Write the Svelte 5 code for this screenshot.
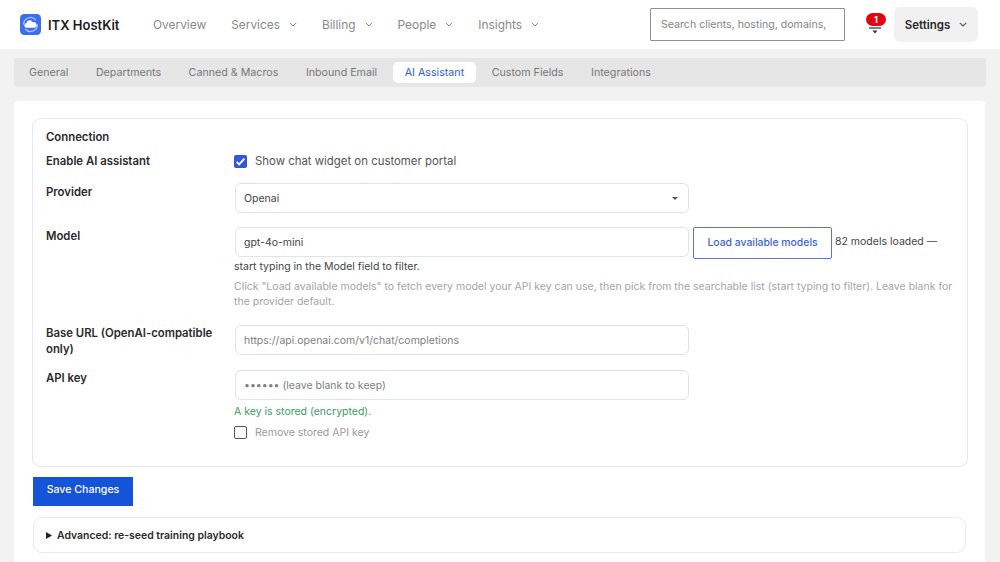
<script lang="ts">
  type Tab = { label: string; active?: boolean };

  const navItems = [
    { label: 'Overview', caret: false },
    { label: 'Services', caret: true },
    { label: 'Billing', caret: true },
    { label: 'People', caret: true },
    { label: 'Insights', caret: true }
  ];

  const tabs: Tab[] = [
    { label: 'General' },
    { label: 'Departments' },
    { label: 'Canned & Macros' },
    { label: 'Inbound Email' },
    { label: 'AI Assistant', active: true },
    { label: 'Custom Fields' },
    { label: 'Integrations' }
  ];
</script>

<header class="topbar">
  <div class="brand">
    <svg class="logo" width="21" height="21" viewBox="0 0 20 20">
      <rect width="20" height="20" rx="4" fill="#3b6ff0" />
      <path d="M3.4 10a6.6 6.6 0 0 1 11.6-4.3M16.6 10A6.6 6.6 0 0 1 5 14.3" fill="none" stroke="#fff" stroke-opacity="0.6" stroke-width="1.2" />
      <path d="M6.4 13a2.2 2.2 0 0 1-.2-4.4 3.1 3.1 0 0 1 5.9-.8 2.7 2.7 0 0 1 1.9 5.2z" fill="#fff" />
    </svg>
    <span class="brand-name">ITX HostKit</span>
  </div>
  <nav class="nav">
    {#each navItems as item}
      <span class="nav-item">
        {item.label}
        {#if item.caret}
          <svg width="8" height="5" viewBox="0 0 8 5"><path d="M.8.8 4 4 7.2.8" fill="none" stroke="#8a8a8a" stroke-width="1" /></svg>
        {/if}
      </span>
    {/each}
  </nav>
  <div class="search">Search clients, hosting, domains,</div>
  <div class="bell">
    <svg width="14" height="7" viewBox="0 0 14 7"><path d="M1 1h12" stroke="#333" stroke-width="1.2" fill="none" /><path d="M4.5 3.5h5L7 6.5z" fill="#333" /></svg>
    <span class="badge">1</span>
  </div>
  <div class="settings">
    Settings
    <svg width="8" height="5" viewBox="0 0 8 5"><path d="M.8.8 4 4 7.2.8" fill="none" stroke="#555" stroke-width="1.1" /></svg>
  </div>
</header>

<main class="page">
  <div class="tabs">
    {#each tabs as tab}
      <span class="tab" class:active={tab.active}>{tab.label}</span>
    {/each}
  </div>

  <section class="panel">
    <div class="group">
      <div class="group-title">Connection</div>

      <div class="row row-check">
        <div class="label">Enable AI assistant</div>
        <div class="check-line">
          <span class="box checked">
            <svg width="13" height="13" viewBox="0 0 13 13"><path d="M2.6 6.8 5.2 9.4 10.4 3.6" fill="none" stroke="#fff" stroke-width="1.8" /></svg>
          </span>
          <span class="check-text">Show chat widget on customer portal</span>
        </div>
      </div>

      <div class="row row-provider">
        <div class="label">Provider</div>
        <div class="field select">
          Openai
          <svg width="6" height="3" viewBox="0 0 6 3"><path d="M0 0h6L3 3z" fill="#555" /></svg>
        </div>
      </div>

      <div class="row row-model">
        <div class="label">Model</div>
        <div class="control">
          <div class="model-line">
            <div class="field">gpt-4o-mini</div>
            <div class="load-btn">Load available models</div>
            <span class="loaded">82 models loaded —</span>
          </div>
          <div class="filter-note">start typing in the Model field to filter.</div>
          <div class="hint">Click "Load available models" to fetch every model your API key can use, then pick from the searchable list (start typing to filter). Leave blank for the provider default.</div>
        </div>
      </div>

      <div class="row row-base">
        <div class="label">Base URL (OpenAI-compatible only)</div>
        <div class="field muted">https://api.openai.com/v1/chat/completions</div>
      </div>

      <div class="row row-key">
        <div class="label">API key</div>
        <div class="control">
          <div class="field muted">•••••• (leave blank to keep)</div>
          <div class="stored">A key is stored (encrypted).</div>
          <div class="check-line remove">
            <span class="box"></span>
            <span class="check-text faded">Remove stored API key</span>
          </div>
        </div>
      </div>
    </div>

    <button class="save" type="button">Save Changes</button>

    <div class="advanced">
      <svg width="6" height="7" viewBox="0 0 6 7"><path d="M0 0 6 3.5 0 7z" fill="#222" /></svg>
      Advanced: re-seed training playbook
    </div>
  </section>
</main>

<style>
  :global(body) {
    margin: 0;
    background: #f2f2f2;
    font-family: Inter, "Liberation Sans", sans-serif;
    overflow: hidden;
  }

  .topbar {
    height: 49px;
    box-sizing: border-box;
    background: #fff;
    display: flex;
    align-items: center;
    padding: 0 22px 0 20px;
  }

  .brand {
    display: flex;
    align-items: center;
    gap: 7px;
    width: 133px;
  }

  .brand-name {
    font-size: 13px;
    font-weight: 600;
    color: #1c1c1c;
    white-space: nowrap;
  }

  .nav {
    display: flex;
    gap: 25px;
    flex: 1;
    font-size: 11.9px;
    color: #8a8a8a;
  }

  .nav-item {
    display: flex;
    align-items: center;
    gap: 9px;
    white-space: nowrap;
  }

  .search {
    width: 195px;
    height: 33px;
    box-sizing: border-box;
    border: 1px solid #8f8f8f;
    border-radius: 1px;
    font-size: 10.6px;
    color: #858585;
    padding: 0 10px;
    display: flex;
    align-items: center;
    white-space: nowrap;
    overflow: hidden;
  }

  .bell {
    position: relative;
    width: 49px;
    height: 33px;
    display: flex;
    justify-content: center;
    align-items: flex-end;
    padding: 0 0 7px 11px;
    box-sizing: border-box;
  }

  .badge {
    position: absolute;
    left: 21px;
    top: 5px;
    width: 20px;
    height: 13px;
    border-radius: 7px;
    background: #e1060f;
    color: #fff;
    font-size: 9px;
    font-weight: 700;
    text-align: center;
    line-height: 13px;
  }

  .settings {
    width: 84px;
    height: 35px;
    box-sizing: border-box;
    background: #f1f1f1;
    border-radius: 6px;
    font-size: 11.5px;
    font-weight: 600;
    color: #2a2a2a;
    display: flex;
    align-items: center;
    justify-content: center;
    gap: 9px;
  }

  .page {
    padding: 9px 14px 0;
  }

  .tabs {
    height: 29px;
    box-sizing: border-box;
    background: #e6e6e6;
    border-radius: 4px;
    display: flex;
    align-items: center;
    gap: 3.5px;
    padding: 0 3px;
    font-size: 10.7px;
    color: #777;
    margin-bottom: 14px;
  }

  .tab {
    padding: 0 12px;
    height: 21px;
    line-height: 21px;
    border-radius: 5px;
    white-space: nowrap;
  }

  .tab.active {
    background: #fff;
    color: #2f5fe0;
  }

  .panel {
    background: #fff;
    padding: 17px 17px 0 18px;
    margin-right: 1px;
    border-radius: 4px 4px 0 0;
    height: 470px;
    box-sizing: border-box;
  }

  .group {
    border: 1px solid #e6e8ec;
    border-radius: 9px;
    padding: 11px 10px 26px 13px;
    box-sizing: border-box;
    margin-bottom: 10px;
  }

  .group-title,
  .label {
    font-size: 11.35px;
    font-weight: 600;
    color: #2a2a2a;
    line-height: 14px;
  }

  .label {
    line-height: 16px;
    padding-right: 14px;
  }

  .row {
    display: grid;
    grid-template-columns: 188px 1fr;
    align-items: start;
  }

  .row-check .label,
  .row-provider .label,
  .row-model .label {
    padding-top: 1px;
  }

  .row-check {
    margin-top: 8px;
  }

  .row-check .check-line {
    margin-top: 1px;
  }

  .check-line {
    display: flex;
    align-items: center;
    gap: 8px;
    height: 16px;
  }

  .box {
    width: 13px;
    height: 13px;
    border-radius: 2px;
    box-sizing: border-box;
    border: 1.5px solid #555;
    display: block;
    flex: none;
  }

  .box.checked {
    background: #3355e0;
    border: 0;
  }

  .box svg {
    display: block;
  }

  .check-text {
    font-size: 11.4px;
    color: #555;
    white-space: nowrap;
  }

  .check-text.faded {
    font-size: 10.5px;
    color: #9a9a9a;
  }

  .field {
    width: 454px;
    height: 30px;
    box-sizing: border-box;
    border: 1px solid #dfe3ea;
    border-radius: 6px;
    font-size: 10.5px;
    color: #444;
    padding: 0 8px;
    margin-left: 1px;
    display: flex;
    align-items: center;
    white-space: nowrap;
    flex: none;
  }

  .field.muted {
    color: #808080;
  }

  .select {
    justify-content: space-between;
    padding-right: 10px;
  }

  .row-provider {
    margin-top: 14px;
  }

  .row-model {
    margin-top: 14px;
  }

  .row-base {
    margin-top: 16px;
  }

  .row-key {
    margin-top: 13px;
  }

  .model-line {
    display: flex;
    align-items: flex-start;
    gap: 4px;
    white-space: nowrap;
  }

  .load-btn {
    width: 139px;
    height: 32px;
    box-sizing: border-box;
    border: 1.5px solid #5673e8;
    border-radius: 2px;
    color: #3e5fdc;
    font-size: 10.4px;
    font-weight: 500;
    padding-bottom: 1px;
    display: flex;
    align-items: center;
    justify-content: center;
  }

  .loaded {
    font-size: 10.5px;
    line-height: 14px;
    margin-top: 8px;
    margin-left: -1px;
    color: #444;
  }

  .filter-note {
    font-size: 10.5px;
    color: #444;
    line-height: 14px;
    margin-top: 1px;
  }

  .hint {
    font-size: 10.5px;
    line-height: 15px;
    color: #a5a5a5;
    margin-top: 5px;
  }

  .stored {
    font-size: 10.5px;
    color: #3d9a63;
    line-height: 14px;
    margin-top: 5px;
  }

  .remove {
    margin-top: 5px;
  }

  .save {
    display: block;
    width: 100px;
    height: 29px;
    border: 0;
    background: #1553d8;
    color: #fff;
    font: 500 10.6px Inter, sans-serif;
    padding: 0 0 4px;
    margin-left: 1px;
  }

  .advanced {
    margin: 11px 2px 0 1px;
    height: 36px;
    box-sizing: border-box;
    border: 1px solid #e9ebef;
    border-radius: 9px;
    font-size: 10.45px;
    font-weight: 600;
    color: #2a2a2a;
    display: flex;
    align-items: center;
    gap: 5px;
    padding-left: 12px;
  }
</style>
